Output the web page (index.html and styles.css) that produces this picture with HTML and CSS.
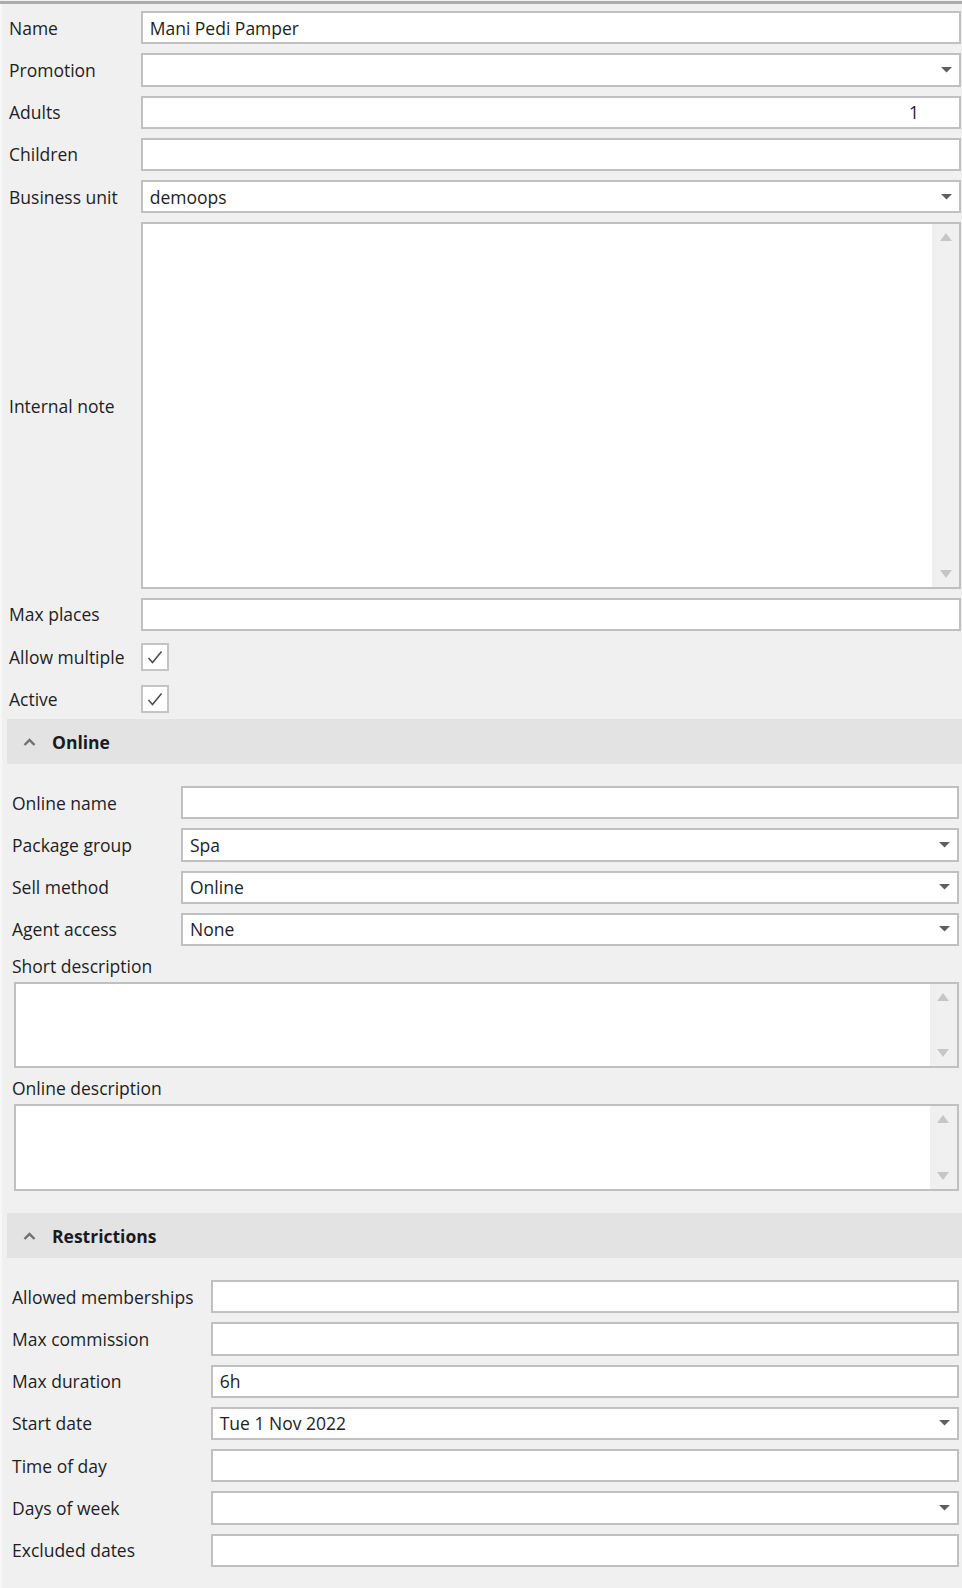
FILE: index.html
```html
<!DOCTYPE html>
<html lang="en">
<head>
    <meta charset="UTF-8">
    <title>Package</title>
    <link rel="stylesheet" href="styles.css">
</head>
<body>
    <div class="panel">
        <div class="form main-form">
            <div class="label">Name</div>
            <div class="field">Mani Pedi Pamper</div>

            <div class="label">Promotion</div>
            <div class="field combo"><span></span><svg class="arrow" width="11" height="6" viewBox="0 0 11 6"><polygon points="0,0 11,0 5.5,5.5"/></svg></div>

            <div class="label">Adults</div>
            <div class="field number">1</div>

            <div class="label">Children</div>
            <div class="field"></div>

            <div class="label">Business unit</div>
            <div class="field combo"><span>demoops</span><svg class="arrow" width="11" height="6" viewBox="0 0 11 6"><polygon points="0,0 11,0 5.5,5.5"/></svg></div>

            <div class="label">Internal note</div>
            <div class="memo note">
                <div class="memo-text"></div>
                <div class="scroll">
                    <svg width="12" height="8" viewBox="0 0 12 8"><polygon points="6,0 12,8 0,8"/></svg>
                    <svg width="12" height="8" viewBox="0 0 12 8"><polygon points="0,0 12,0 6,8"/></svg>
                </div>
            </div>

            <div class="label">Max places</div>
            <div class="field"></div>

            <div class="label">Allow multiple</div>
            <div class="check"><svg width="18" height="18" viewBox="0 0 18 18"><polyline points="2.5,10 6.5,14.5 15.5,3.5"/></svg></div>

            <div class="label">Active</div>
            <div class="check"><svg width="18" height="18" viewBox="0 0 18 18"><polyline points="2.5,10 6.5,14.5 15.5,3.5"/></svg></div>
        </div>

        <div class="group-head">
            <svg class="caret" width="13" height="8" viewBox="0 0 13 8"><polyline points="1.5,7 6.5,2 11.5,7"/></svg>
            <span>Online</span>
        </div>
        <div class="section online">
            <div class="form online-form">
                <div class="label">Online name</div>
                <div class="field"></div>

                <div class="label">Package group</div>
                <div class="field combo"><span>Spa</span><svg class="arrow" width="11" height="6" viewBox="0 0 11 6"><polygon points="0,0 11,0 5.5,5.5"/></svg></div>

                <div class="label">Sell method</div>
                <div class="field combo"><span>Online</span><svg class="arrow" width="11" height="6" viewBox="0 0 11 6"><polygon points="0,0 11,0 5.5,5.5"/></svg></div>

                <div class="label">Agent access</div>
                <div class="field combo"><span>None</span><svg class="arrow" width="11" height="6" viewBox="0 0 11 6"><polygon points="0,0 11,0 5.5,5.5"/></svg></div>
            </div>

            <div class="block-label">Short description</div>
            <div class="memo desc">
                <div class="memo-text"></div>
                <div class="scroll">
                    <svg width="12" height="8" viewBox="0 0 12 8"><polygon points="6,0 12,8 0,8"/></svg>
                    <svg width="12" height="8" viewBox="0 0 12 8"><polygon points="0,0 12,0 6,8"/></svg>
                </div>
            </div>

            <div class="block-label">Online description</div>
            <div class="memo desc">
                <div class="memo-text"></div>
                <div class="scroll">
                    <svg width="12" height="8" viewBox="0 0 12 8"><polygon points="6,0 12,8 0,8"/></svg>
                    <svg width="12" height="8" viewBox="0 0 12 8"><polygon points="0,0 12,0 6,8"/></svg>
                </div>
            </div>
        </div>

        <div class="group-head">
            <svg class="caret" width="13" height="8" viewBox="0 0 13 8"><polyline points="1.5,7 6.5,2 11.5,7"/></svg>
            <span>Restrictions</span>
        </div>
        <div class="section">
            <div class="form restrict-form">
                <div class="label">Allowed memberships</div>
                <div class="field"></div>

                <div class="label">Max commission</div>
                <div class="field"></div>

                <div class="label">Max duration</div>
                <div class="field">6h</div>

                <div class="label">Start date</div>
                <div class="field combo"><span>Tue 1 Nov 2022</span><svg class="arrow" width="11" height="6" viewBox="0 0 11 6"><polygon points="0,0 11,0 5.5,5.5"/></svg></div>

                <div class="label">Time of day</div>
                <div class="field"></div>

                <div class="label">Days of week</div>
                <div class="field combo"><span></span><svg class="arrow" width="11" height="6" viewBox="0 0 11 6"><polygon points="0,0 11,0 5.5,5.5"/></svg></div>

                <div class="label">Excluded dates</div>
                <div class="field"></div>
            </div>
        </div>
    </div>
</body>
</html>
```

FILE: styles.css
```css
html, body {
    margin: 0;
    padding: 0;
    background-color: #f0f0f0;
}
body {
    font-family: "Open Sans", "Noto Sans", sans-serif;
    font-size: 17.5px;
    color: #1e1e24;
    height: 1588px;
    overflow: hidden;
}
.panel {
    margin-top: 1px;
    border-top: 3px solid #acacac;
    box-shadow: inset 2px 0 0 #f7f7f7;
    min-height: 1584px;
}
.form {
    display: grid;
    row-gap: 9px;
    align-items: center;
}
.main-form {
    grid-template-columns: 131.7px 1fr;
    padding: 7px 1px 4px 9px;
}
.online-form {
    grid-template-columns: 169px 1fr;
}
.restrict-form {
    grid-template-columns: 198.7px 1fr;
}
.section {
    padding: 21.7px 3.3px 0 12px;
}
.section.online {
    padding-bottom: 22.5px;
}
.label {
    white-space: nowrap;
    line-height: 22px;
}
.field {
    height: 33.25px;
    box-sizing: border-box;
    border: 2px solid #c0c0c0;
    background-color: #fff;
    padding: 0 7px 0 7px;
    display: flex;
    align-items: center;
    white-space: nowrap;
}
.field.number {
    justify-content: flex-end;
    padding-right: 40px;
}
.combo .arrow {
    margin-left: auto;
    fill: #5e5e5e;
}
.memo {
    display: flex;
    box-sizing: border-box;
    border: 2px solid #c0c0c0;
    background-color: #fff;
}
.memo.note {
    height: 366.5px;
}
.memo.desc {
    height: 86.4px;
    margin: 5px 0 0 2px;
}
.memo-text {
    flex: 1;
}
.scroll {
    width: 27px;
    background-color: #f0f0f0;
    display: flex;
    flex-direction: column;
    justify-content: space-between;
    align-items: center;
    padding: 9px 0 9px 0;
}
.scroll svg {
    fill: #c6c6c6;
}
.check {
    width: 28px;
    height: 28px;
    margin: 2.6px 0;
    box-sizing: border-box;
    border: 2px solid #c4c4c4;
    background-color: #fff;
    display: flex;
    align-items: center;
    justify-content: center;
}
.check svg {
    fill: none;
    stroke: #4a4a4a;
    stroke-width: 1.5;
}
.group-head {
    margin-left: 7px;
    height: 45px;
    background-color: #e3e3e3;
    display: flex;
    align-items: center;
    font-weight: bold;
    color: #1a1a22;
}
.group-head .caret {
    margin: 0 16px 0 16px;
    fill: none;
    stroke: #707070;
    stroke-width: 2.4;
}
.block-label {
    margin-top: 9px;
    line-height: 22px;
}
```
